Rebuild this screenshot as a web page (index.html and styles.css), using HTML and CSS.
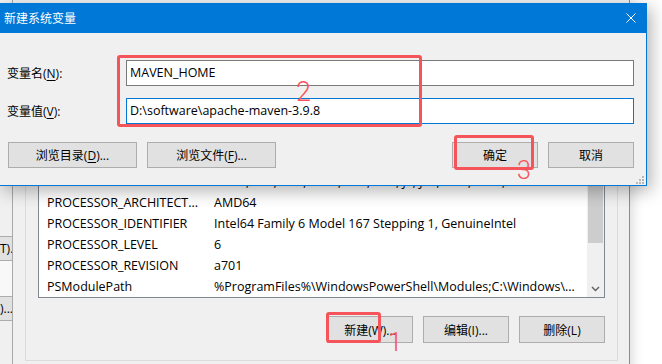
FILE: index.html
```html
<!doctype html>
<html lang="zh-CN">
    <head>
        <meta charset="UTF-8" />
        <title>新建系统变量</title>
        <link rel="stylesheet" href="styles.css">
    </head>
    <body>
        <div class="desktop">
            <!-- environment variables window, behind the dialog -->
            <div class="env-window">
                <div class="side-strip">
                    <div class="side-btn side-btn-top">T).</div>
                    <div class="side-gap"></div>
                    <div class="side-btn">)...</div>
                </div>

                <div class="var-group">
                    <div class="var-list">
                        <div class="var-rows">
                            <div class="var-row">
                                <span class="var-name">PATHEXT</span>
                                <span class="var-value">.COM;.EXE;.BAT;.CMD;.VBS;.VBE;.JS;.JSE;.WSF;.WSH;.MSC</span>
                            </div>
                            <div class="var-row">
                                <span class="var-name">PROCESSOR_ARCHITECT...</span>
                                <span class="var-value">AMD64</span>
                            </div>
                            <div class="var-row">
                                <span class="var-name">PROCESSOR_IDENTIFIER</span>
                                <span class="var-value">Intel64 Family 6 Model 167 Stepping 1, GenuineIntel</span>
                            </div>
                            <div class="var-row">
                                <span class="var-name">PROCESSOR_LEVEL</span>
                                <span class="var-value">6</span>
                            </div>
                            <div class="var-row">
                                <span class="var-name">PROCESSOR_REVISION</span>
                                <span class="var-value">a701</span>
                            </div>
                            <div class="var-row">
                                <span class="var-name">PSModulePath</span>
                                <span class="var-value">%ProgramFiles%\WindowsPowerShell\Modules;C:\Windows\...</span>
                            </div>
                        </div>
                        <div class="scrollbar">
                            <div class="scroll-thumb"></div>
                            <div class="scroll-down">
                                <svg width="9" height="6" viewBox="0 0 9 6">
                                    <path d="M1 1 L4.5 4.5 L8 1" fill="none" stroke="#606060" stroke-width="1.4" />
                                </svg>
                            </div>
                        </div>
                    </div>

                    <div class="var-actions">
                        <button class="win-btn">新建(W)...</button>
                        <button class="win-btn">编辑(I)...</button>
                        <button class="win-btn">删除(L)</button>
                    </div>
                </div>
            </div>

            <!-- new system variable dialog -->
            <div class="dialog">
                <div class="title-bar">
                    <span class="title-text">新建系统变量</span>
                    <svg class="close-icon" width="10" height="10" viewBox="0 0 10 10">
                        <path d="M0.5 0.5 L9.5 9.5 M9.5 0.5 L0.5 9.5" stroke="#fff" stroke-width="1" />
                    </svg>
                </div>
                <div class="dialog-body">
                    <div class="field-row">
                        <label class="field-label">变量名(<u>N</u>):</label>
                        <div class="field-input">MAVEN_HOME</div>
                    </div>
                    <div class="field-row">
                        <label class="field-label">变量值(<u>V</u>):</label>
                        <div class="field-input field-focus">D:\software\apache-maven-3.9.8</div>
                    </div>
                    <div class="dialog-actions">
                        <button class="win-btn browse-btn">浏览目录(<u>D</u>)...</button>
                        <button class="win-btn browse-btn">浏览文件(<u>F</u>)...</button>
                        <div class="spacer"></div>
                        <button class="win-btn">确定</button>
                        <button class="win-btn">取消</button>
                    </div>
                </div>
                <svg class="grip" width="8" height="8" viewBox="0 0 8 8">
                    <rect x="6" y="0" width="2" height="2" fill="#b8b8b8" />
                    <rect x="3" y="3" width="2" height="2" fill="#b8b8b8" />
                    <rect x="6" y="3" width="2" height="2" fill="#b8b8b8" />
                    <rect x="0" y="6" width="2" height="2" fill="#b8b8b8" />
                    <rect x="3" y="6" width="2" height="2" fill="#b8b8b8" />
                    <rect x="6" y="6" width="2" height="2" fill="#b8b8b8" />
                </svg>
            </div>

            <!-- red annotations -->
            <div class="mark mark-fields"></div>
            <span class="mark-num num-2">2</span>
            <div class="mark mark-ok"></div>
            <span class="mark-num num-3">3</span>
            <div class="mark mark-new"></div>
            <span class="mark-num num-1">1</span>
        </div>
    </body>
</html>
```

FILE: styles.css
```css
* {
    margin: 0;
    padding: 0;
    box-sizing: border-box;
}

body {
    font-family: "Open Sans", "Noto Sans CJK SC", sans-serif;
    font-size: 12px;
    color: #000;
    background: #fff;
}

.desktop {
    position: relative;
    width: 662px;
    height: 364px;
    overflow: hidden;
    background: #fff;
}

/* background window */

.env-window {
    display: flex;
    width: 630px;
    height: 400px;
    background: #f0f0f0;
    border-right: 1px solid #8c8c8c;
    box-shadow: 4px 0 10px rgba(0, 0, 0, 0.12);
}

.side-strip {
    display: flex;
    flex-direction: column;
    width: 13px;
    padding-top: 236px;
    border-right: 1px solid #a8a8a8;
    overflow: hidden;
}

.side-btn {
    height: 25px;
    background: #e1e1e1;
    border-top: 1px solid #adadad;
    border-bottom: 1px solid #adadad;
    text-align: right;
    white-space: nowrap;
    line-height: 23px;
}

.side-gap {
    height: 35px;
    background: #f8f8f8;
}

.var-group {
    display: flex;
    flex-direction: column;
    width: 593px;
    height: 301px;
    margin: 60px 11px 0 12px;
    padding: 67px 12px 17px;
    border: 1px solid #dcdcdc;
}

.var-list {
    display: flex;
    height: 170px;
    background: #fff;
    border: 1px solid #828790;
}

.var-rows {
    flex: 1;
    padding-top: 42px;
    overflow: hidden;
    font-size: 12.5px;
}

.var-row {
    display: flex;
    align-items: center;
    height: 21px;
    padding-left: 8px;
    white-space: nowrap;
}

.var-name {
    width: 167px;
    flex-shrink: 0;
}

.scrollbar {
    display: flex;
    flex-direction: column;
    width: 17px;
    background: #f0f0f0;
}

.scroll-thumb {
    height: 86px;
    margin: 28px 1px 0;
    background: #cdcdcd;
}

.scroll-down {
    display: flex;
    align-items: center;
    justify-content: center;
    height: 17px;
    margin-top: auto;
}

.var-actions {
    display: flex;
    justify-content: flex-end;
    gap: 10px;
    margin-top: 18px;
}

.var-actions .win-btn {
    height: 27px;
}

.win-btn {
    width: 86px;
    height: 26px;
    background: #e1e1e1;
    border: 1px solid #adadad;
    font-family: inherit;
    font-size: 12px;
    color: #000;
}

.win-btn u {
    text-underline-offset: 2px;
}

/* dialog */

.dialog {
    position: absolute;
    left: -1px;
    top: 3px;
    width: 648px;
    height: 183px;
    background: #f0f0f0;
    border: 1px solid #0078d7;
    border-top: 0;
    box-shadow: 4px 5px 16px rgba(0, 0, 0, 0.3);
}

.title-bar {
    display: flex;
    align-items: center;
    justify-content: space-between;
    height: 30px;
    padding: 0 10px 0 4px;
    background: #0078d7;
    color: #fff;
}

.dialog-body {
    display: flex;
    flex-direction: column;
    gap: 12px;
    padding: 27px 12px 0 7px;
}

.field-row {
    display: flex;
    align-items: center;
}

.field-label {
    width: 119px;
}

.field-label u {
    text-underline-offset: 2px;
}

.field-input {
    flex: 1;
    height: 26px;
    padding-left: 3px;
    line-height: 24px;
    background: #fff;
    border: 1px solid #7a7a7a;
    font-size: 12.5px;
}

.field-focus {
    border-color: #0078d7;
}

.dialog-actions {
    display: flex;
    gap: 10px;
    margin-top: 6px;
    padding-left: 1px;
}

.browse-btn {
    width: 129px;
}

.spacer {
    flex: 1;
}

.grip {
    position: absolute;
    right: 2px;
    bottom: 1px;
}

/* annotations */

.mark {
    position: absolute;
    border: 3px solid #f5555a;
    border-radius: 3px;
}

.mark-fields {
    left: 117px;
    top: 55px;
    width: 305px;
    height: 72px;
}

.mark-ok {
    left: 454px;
    top: 135px;
    width: 80px;
    height: 35px;
}

.mark-new {
    left: 326px;
    top: 312px;
    width: 55px;
    height: 31px;
}

.mark-num {
    position: absolute;
    font-family: Roboto, "Liberation Sans", sans-serif;
    font-weight: 300;
    font-size: 27px;
    line-height: 1;
    color: #f5555a;
}

.num-2 {
    left: 296px;
    top: 79px;
}

.num-3 {
    left: 517px;
    top: 158px;
    font-size: 25px;
}

.num-1 {
    left: 388px;
    top: 329px;
    font-size: 26px;
}
```
